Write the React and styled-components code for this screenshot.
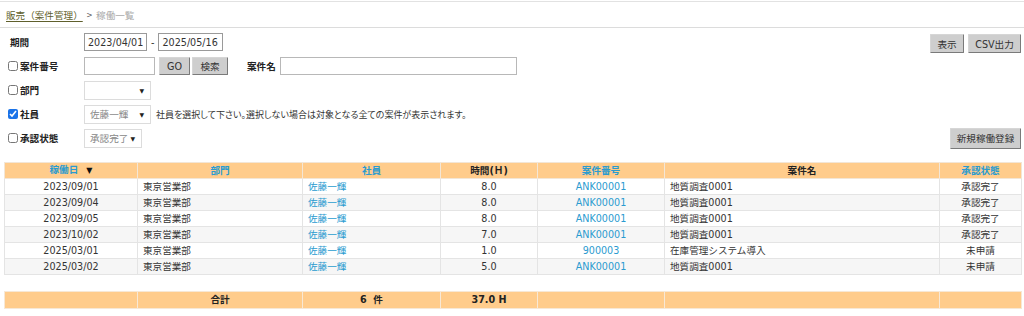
import React from "react";
import styled, { createGlobalStyle } from "styled-components";

const Global = createGlobalStyle`
  html, body { margin: 0; padding: 0; background: #fff; }
  body {
    font-family: "DejaVu Sans", "Noto Sans CJK JP", sans-serif;
    font-size: 9.6px;
    color: #333;
  }
  * { box-sizing: border-box; }
`;

const Shell = styled.div`
  margin-top: 1px;
  border-top: 1px solid #e2e2e2;
`;

const Breadcrumb = styled.nav`
  height: 26px;
  display: flex;
  align-items: center;
  padding-left: 6px;
  border-bottom: 1px solid #dcdcdc;
  font-family: "Noto Sans CJK JP", sans-serif;
`;

const CrumbLink = styled.a`
  color: #5f5f2c;
  text-decoration: underline;
  text-underline-offset: 2px;
`;

const CrumbSep = styled.span`
  color: #555;
  margin: 0 4px 0 4px;
`;

const CrumbCurrent = styled.span`
  color: #aaa;
`;

const Page = styled.div`
  padding: 2px 3px 0 4px;
`;

const Form = styled.div`
  display: flex;
  flex-direction: column;
`;

const FormRow = styled.div`
  height: 24px;
  display: flex;
  align-items: center;
`;

const Label = styled.label`
  width: 80px;
  flex-shrink: 0;
  display: flex;
  align-items: center;
  padding-left: ${(p) => (p.$plain ? "6px" : "4px")};
  font-weight: bold;
  color: #222;
`;

const Check = styled.input.attrs({ type: "checkbox" })`
  width: 10px;
  height: 10px;
  margin: 0 2px 0 0;
  accent-color: #1a73e8;
`;

const TextBox = styled.input`
  width: ${(p) => p.$w}px;
  height: 18px;
  border: 1px solid ${(p) => (p.$dark ? "#9a9a9a" : "#b8b8b8")};
  padding: 0 3px;
  font: inherit;
  font-size: 9.6px;
  color: #333;
  margin-left: ${(p) => p.$ml || 0}px;
  outline: none;
`;

const Dash = styled.span`
  margin: 0 4px;
`;

const Btn = styled.button`
  height: ${(p) => p.$h || 18}px;
  min-width: ${(p) => p.$w}px;
  padding: 0 4px;
  margin-left: ${(p) => p.$ml || 0}px;
  background: #cecece;
  border: 1px solid #d6d6d6;
  border-right-color: #7a7a7a;
  border-bottom-color: #7a7a7a;
  border-radius: 1px;
  font-family: "DejaVu Sans", "Noto Sans CJK JP", sans-serif;
  font-size: 9.6px;
  color: #333;
  cursor: pointer;
`;

const Spacer = styled.div`
  flex: 1;
`;

const RightGroup = styled.div`
  display: flex;
  gap: 4px;
  align-self: flex-end;
  margin-bottom: 1px;
`;

const InlineLabel = styled.span`
  font-weight: bold;
  color: #222;
  margin-left: 19px;
  margin-right: 4px;
`;

const Dropdown = styled.div`
  width: ${(p) => p.$w}px;
  height: 19px;
  border: 1px solid #dcdcdc;
  display: flex;
  align-items: center;
  justify-content: space-between;
  padding: 0 6px 0 5px;
  color: #888;
  background: #fff;
`;

const Caret = styled.span`
  font-size: 6px;
  color: #222;
`;

const Hint = styled.span`
  margin-left: 5px;
  font-family: "Noto Sans CJK JP", sans-serif;
  font-feature-settings: "palt";
  font-size: 9px;
  color: #333;
`;

const Table = styled.table`
  width: 1017px;
  border-collapse: collapse;
  table-layout: fixed;
  margin-top: ${(p) => p.$mt}px;
`;

const Th = styled.th`
  height: 16px;
  padding: 0 4px;
  background: #ffcc8c;
  border: 1px solid #f3e6d6;
  font-weight: bold;
  text-align: center;
  color: ${(p) => (p.$link ? "#2a9bd0" : "#222")};
  line-height: 14px;
  white-space: nowrap;
`;

const Tr = styled.tr`
  background: ${(p) => (p.$alt ? "#f6f6f6" : "#fff")};
`;

const Td = styled.td`
  height: 16px;
  padding: 0 5px;
  border: 1px solid #e4e4e4;
  text-align: ${(p) => p.$align || "left"};
  color: ${(p) => (p.$link ? "#2a9bd0" : "#333")};
  line-height: 14px;
  white-space: nowrap;
`;

const TotalTd = styled.td`
  height: 17px;
  padding: 0 5px;
  background: #ffcc8c;
  border: 1px solid #f7e8d6;
  text-align: center;
  font-weight: bold;
  color: #222;
  line-height: 14px;
  white-space: nowrap;
`;

const SortMark = styled.span`
  color: #111;
  margin-left: 8px;
  font-size: 8px;
`;

const widths = [133, 165, 138, 97, 127, 275, 82];

const Cols = () => (
  <colgroup>
    {widths.map((w, i) => (
      <col key={i} style={{ width: w }} />
    ))}
  </colgroup>
);

const rows = [
  ["2023/09/01", "東京営業部", "佐藤一輝", "8.0", "ANK00001", "地質調査0001", "承認完了"],
  ["2023/09/04", "東京営業部", "佐藤一輝", "8.0", "ANK00001", "地質調査0001", "承認完了"],
  ["2023/09/05", "東京営業部", "佐藤一輝", "8.0", "ANK00001", "地質調査0001", "承認完了"],
  ["2023/10/02", "東京営業部", "佐藤一輝", "7.0", "ANK00001", "地質調査0001", "承認完了"],
  ["2025/03/01", "東京営業部", "佐藤一輝", "1.0", "900003", "在庫管理システム導入", "未申請"],
  ["2025/03/02", "東京営業部", "佐藤一輝", "5.0", "ANK00001", "地質調査0001", "未申請"],
];

export default function App() {
  return (
    <>
      <Global />
      <Shell>
        <Breadcrumb>
          <CrumbLink>販売（案件管理）</CrumbLink>
          <CrumbSep>&gt;</CrumbSep>
          <CrumbCurrent>稼働一覧</CrumbCurrent>
        </Breadcrumb>
        <Page>
          <Form>
            <FormRow>
              <Label $plain>期間</Label>
              <TextBox $w={63} $dark defaultValue="2023/04/01" />
              <Dash>-</Dash>
              <TextBox $w={65} $dark defaultValue="2025/05/16" />
              <Spacer />
              <RightGroup>
                <Btn $w={34} $h={19}>表示</Btn>
                <Btn $w={53} $h={19}>CSV出力</Btn>
              </RightGroup>
            </FormRow>
            <FormRow>
              <Label>
                <Check />
                案件番号
              </Label>
              <TextBox $w={71} />
              <Btn $w={31} $ml={4}>GO</Btn>
              <Btn $w={36} $ml={2}>検索</Btn>
              <InlineLabel>案件名</InlineLabel>
              <TextBox $w={237} />
            </FormRow>
            <FormRow>
              <Label>
                <Check />
                部門
              </Label>
              <Dropdown $w={67}>
                <span />
                <Caret>▼</Caret>
              </Dropdown>
            </FormRow>
            <FormRow>
              <Label>
                <Check defaultChecked />
                社員
              </Label>
              <Dropdown $w={67}>
                <span>佐藤一輝</span>
                <Caret>▼</Caret>
              </Dropdown>
              <Hint>社員を選択して下さい。選択しない場合は対象となる全ての案件が表示されます。</Hint>
            </FormRow>
            <FormRow>
              <Label>
                <Check />
                承認状態
              </Label>
              <Dropdown $w={58}>
                <span>承認完了</span>
                <Caret>▼</Caret>
              </Dropdown>
              <Spacer />
              <Btn $w={71} $h={21}>新規稼働登録</Btn>
            </FormRow>
          </Form>

          <Table $mt={12}>
            <Cols />
            <thead>
              <tr>
                <Th $link>
                  稼働日<SortMark>▼</SortMark>
                </Th>
                <Th $link>部門</Th>
                <Th $link>社員</Th>
                <Th>時間(Ｈ)</Th>
                <Th $link>案件番号</Th>
                <Th>案件名</Th>
                <Th $link>承認状態</Th>
              </tr>
            </thead>
            <tbody>
              {rows.map((r, i) => (
                <Tr key={i} $alt={i % 2 === 1}>
                  <Td $align="center">{r[0]}</Td>
                  <Td>{r[1]}</Td>
                  <Td $link>{r[2]}</Td>
                  <Td $align="center">{r[3]}</Td>
                  <Td $align="center" $link>{r[4]}</Td>
                  <Td>{r[5]}</Td>
                  <Td $align="center">{r[6]}</Td>
                </Tr>
              ))}
            </tbody>
          </Table>

          <Table $mt={16}>
            <Cols />
            <tbody>
              <tr>
                <TotalTd />
                <TotalTd>合計</TotalTd>
                <TotalTd>6&nbsp;&nbsp;件</TotalTd>
                <TotalTd>37.0 H</TotalTd>
                <TotalTd />
                <TotalTd />
                <TotalTd />
              </tr>
            </tbody>
          </Table>
        </Page>
      </Shell>
    </>
  );
}
